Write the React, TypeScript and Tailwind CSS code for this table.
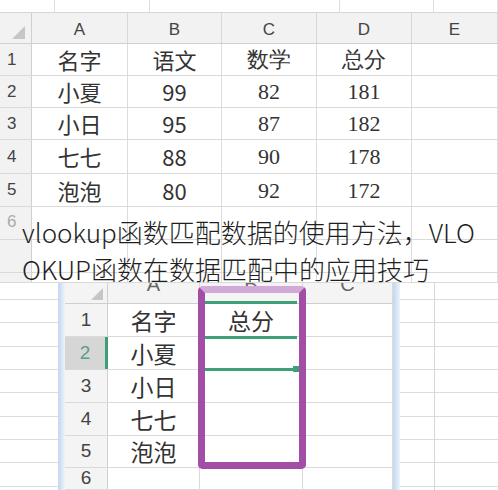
const cjk = "font-['Noto_Sans_CJK_SC','Noto_Sans',sans-serif]"

const topWidths = [32, 96, 94, 95, 95, 86]
const topRows: { h: number; n: string; cells: string[] }[] = [
  { h: 32, n: "1", cells: ["名字", "语文", "数学", "总分", ""] },
  { h: 32, n: "2", cells: ["小夏", "99", "82", "181", ""] },
  { h: 32, n: "3", cells: ["小日", "95", "87", "182", ""] },
  { h: 34, n: "4", cells: ["七七", "88", "90", "178", ""] },
  { h: 33, n: "5", cells: ["泡泡", "80", "92", "172", ""] },
  { h: 33, n: "6", cells: ["", "", "", "", ""] },
  { h: 33, n: "", cells: ["", "", "", "", ""] },
  { h: 10, n: "", cells: ["", "", "", "", ""] },
]

function Corner({ className }: { className: string }) {
  return (
    <svg className={className} viewBox="0 0 14 14" width="14" height="14">
      <polygon points="14,0 14,14 0,14" fill="#c6c6c6" />
    </svg>
  )
}

function TopSheet() {
  return (
    <div className="w-[498px] h-[283px] overflow-hidden bg-white">
      {/* strip of the grid above */}
      <div className="flex h-[13px] border-b border-[#d6d6d6]">
        {[55, 95, 190, 94, 64].map((w, i) => (
          <div key={i} className="h-full border-r border-[#dedede]" style={{ width: w }} />
        ))}
      </div>
      {/* column header */}
      <div className="flex h-[31px] bg-[#f2f2f2] border-b border-[#d0d0d0]">
        <div className="flex items-end justify-end pr-[6px] pb-[4px] border-r border-[#d0d0d0]" style={{ width: topWidths[0] }}>
          <Corner className="w-[13px] h-[13px]" />
        </div>
        {["A", "B", "C", "D", "E"].map((c, i) => (
          <div
            key={c}
            className="flex items-center justify-center pt-[3px] border-r border-[#d8d8d8] text-[17px] text-[#444] font-['Liberation_Sans',sans-serif]"
            style={{ width: topWidths[i + 1] }}
          >
            {c}
          </div>
        ))}
      </div>
      {topRows.map((r, ri) => (
        <div key={ri} className="flex border-b border-[#dadada]" style={{ height: r.h }}>
          <div
            className={`flex items-center pl-[7px] bg-[#f2f2f2] border-r border-[#d0d0d0] text-[17px] font-['Liberation_Sans',sans-serif] ${ri === 5 ? "text-[#aaa] items-start pt-[2px]" : "text-[#444]"}`}
            style={{ width: topWidths[0] }}
          >
            {r.n}
          </div>
          {r.cells.map((c, ci) => (
            <div
              key={ci}
              className={`flex items-center justify-center border-r border-[#dcdcdc] text-[22px] text-[#333] ${ci >= 2 ? "font-['Liberation_Serif',serif]" : cjk}`}
              style={{ width: topWidths[ci + 1] }}
            >
              {c}
            </div>
          ))}
        </div>
      ))}
    </div>
  )
}

const sideLines = [17, 23, 24, 23, 23, 24, 23, 23, 24]

function SidePane({ width, split }: { width: number; split?: number }) {
  return (
    <div className="relative h-full bg-white overflow-hidden" style={{ width }}>
      {sideLines.map((h, i) => (
        <div key={i} className="border-b border-[#dcdcdc]" style={{ height: h }} />
      ))}
      {split !== undefined && (
        <div className="absolute top-0 bottom-0 border-l border-[#d6d6d6]" style={{ left: split }} />
      )}
    </div>
  )
}

function BlueEdge() {
  return <div className="h-full w-[7px] bg-gradient-to-r from-[#c3d7ef] via-[#d6e4f5] to-[#eef4fb]" />
}

const botWidths = [43, 92, 103, 90]
const botRows: { h: number; n: string; a: string; b: string }[] = [
  { h: 33, n: "1", a: "名字", b: "总分" },
  { h: 33, n: "2", a: "小夏", b: "" },
  { h: 33, n: "3", a: "小日", b: "" },
  { h: 33, n: "4", a: "七七", b: "" },
  { h: 32, n: "5", a: "泡泡", b: "" },
  { h: 22, n: "6", a: "", b: "" },
]

function BottomSheet() {
  return (
    <div className="relative flex h-[207px] w-[498px] overflow-hidden bg-white">
      <SidePane width={58} />
      <BlueEdge />
      <div className="w-[328px] h-full bg-white">
        <div className="flex h-[21px] bg-[#f4f4f4] border-b border-[#cfcfcf] overflow-hidden">
          <div className="flex items-end justify-end pr-[2px] pb-[3px] border-r border-[#cfcfcf]" style={{ width: botWidths[0] }}>
            <Corner className="w-[16px] h-[12px]" />
          </div>
          {["A", "B", "C"].map((c, i) => (
            <div
              key={c}
              className="flex items-start justify-center border-r border-[#dadada] text-[20px] leading-[20px] text-[#666] font-['Liberation_Sans',sans-serif]"
              style={{ width: botWidths[i + 1] }}
            >
              <span className="-mt-[9px]">{c}</span>
            </div>
          ))}
        </div>
        {botRows.map((r, ri) => (
          <div key={ri} className="flex border-b border-[#dadada]" style={{ height: r.h }}>
            <div
              className={`flex items-center justify-center border-r text-[19px] font-['Liberation_Sans',sans-serif] ${ri === 1 ? "bg-[#d6d6d6] text-[#5a9e86] border-r-[3px] border-[#3e9f77]" : "bg-[#f4f4f4] text-[#444] border-[#cfcfcf]"}`}
              style={{ width: botWidths[0] }}
            >
              {r.n}
            </div>
            <div className={`flex items-center justify-center border-r border-[#dadada] text-[23px] text-[#333] ${cjk}`} style={{ width: botWidths[1] }}>
              {r.a}
            </div>
            <div className={`flex items-center justify-center border-r border-[#dadada] text-[23px] text-[#333] ${cjk}`} style={{ width: botWidths[2] }}>
              {r.b}
            </div>
            <div className="border-r border-[#dadada]" style={{ width: botWidths[3] }} />
          </div>
        ))}
      </div>
      <BlueEdge />
      <SidePane width={98} split={34} />

      {/* selection lines inside column B */}
      <div className="absolute left-[205px] top-[18px] w-[92px] h-[3px] bg-[#3f9f78]" />
      <div className="absolute left-[205px] top-[53px] w-[92px] h-[3px] bg-[#3f9f78]" />
      <div className="absolute left-[205px] top-[85px] w-[92px] h-[3px] bg-[#3f9f78]" />
      <div className="absolute left-[293px] top-[83px] w-[6px] h-[6px] bg-[#3f9f78]" />

      {/* purple highlight box */}
      <div className="absolute left-[198px] top-[3px] w-[108px] h-[183px] rounded-[5px] border-[7px] border-[#a34ea6] border-t-[#d3a9d7]" />
    </div>
  )
}

export default function App() {
  return (
    <div className="relative w-[498px] h-[490px] overflow-hidden bg-white">
      <TopSheet />
      <BottomSheet />
      <div
        className={`absolute left-[22px] top-[213px] w-[462px] break-all text-[26px] font-light leading-[37px] text-[#1f1f1f] ${cjk}`}
      >
        vlookup函数匹配数据的使用方法，VLOOKUP函数在数据匹配中的应用技巧
      </div>
    </div>
  )
}
